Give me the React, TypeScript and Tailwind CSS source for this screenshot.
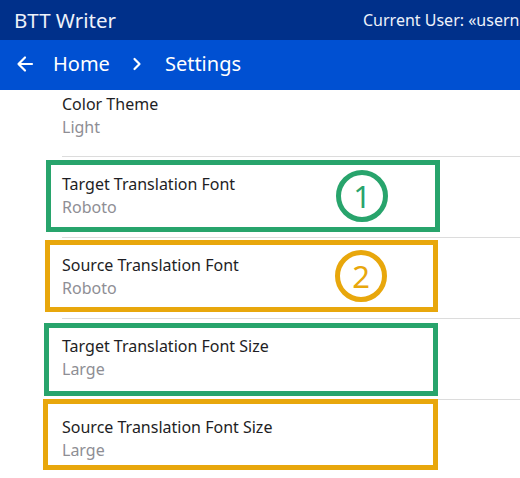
import React from "react";

const rows = [
  { title: "Color Theme", value: "Light", first: true },
  { title: "Target Translation Font", value: "Roboto" },
  { title: "Source Translation Font", value: "Roboto" },
  { title: "Target Translation Font Size", value: "Large" },
  { title: "Source Translation Font Size", value: "Large", last: true },
];

function Box({ cls, color, num }: { cls: string; color: string; num?: string }) {
  return (
    <div className={`absolute border-[5px] ${cls}`} style={{ borderColor: color }}>
      {num && (
        <div
          className="absolute top-1/2 left-[311px] -translate-x-1/2 -translate-y-1/2 w-[52px] h-[52px] rounded-full border-[5px] flex items-center justify-center text-[31px] leading-none"
          style={{ borderColor: color, color }}
        >
          {num}
        </div>
      )}
    </div>
  );
}

export default function App() {
  return (
    <div
      className="relative w-[520px] h-[478px] bg-white overflow-hidden"
      style={{ fontFamily: '"Noto Sans", "Open Sans", sans-serif' }}
    >
      <div className="h-[40px] bg-[#00308a] flex items-center pl-[14px] text-[#eef2fa] whitespace-nowrap overflow-hidden">
        <span className="text-[20.5px] w-[349px] shrink-0">BTT Writer</span>
        <span className="text-[16px] shrink-0">Current User: «username»</span>
      </div>
      <div className="h-[50px] bg-[#0050d2] flex items-center text-white text-[20px] pl-[16px] pb-[3px]">
        <svg width="18" height="18" viewBox="0 0 18 18" fill="none" stroke="white" strokeWidth="2.2" strokeLinecap="round" strokeLinejoin="round">
          <path d="M16 9H2.5M9 2.5L2.5 9L9 15.5" />
        </svg>
        <span className="ml-[19px]">Home</span>
        <svg className="ml-[22px]" width="10" height="14" viewBox="0 0 10 14" fill="none" stroke="white" strokeWidth="2.2" strokeLinecap="round" strokeLinejoin="round">
          <path d="M2.5 2l5 5-5 5" />
        </svg>
        <span className="ml-[23px]">Settings</span>
      </div>
      <div className="ml-[62px]">
        {rows.map((r) => (
          <div
            key={r.title}
            className={`${r.first ? "pt-[4px] pb-[19px]" : "pt-[17px] pb-[20px]"} ${r.last ? "" : "border-b border-[#dcdcdc]"}`}
          >
            <div className="text-[16px] leading-[20px] text-[#1e1e24]">{r.title}</div>
            <div className="text-[16px] leading-[20px] mt-[3px] text-[#8e8e94]">{r.value}</div>
          </div>
        ))}
      </div>
      <Box cls="left-[46px] top-[160px] w-[394px] h-[72px]" color="#28a46c" num="1" />
      <Box cls="left-[45px] top-[240px] w-[393px] h-[72px]" color="#e8a70c" num="2" />
      <Box cls="left-[44px] top-[323px] w-[394px] h-[73px]" color="#28a46c" />
      <Box cls="left-[43px] top-[399px] w-[395px] h-[71px]" color="#e8a70c" />
    </div>
  );
}
